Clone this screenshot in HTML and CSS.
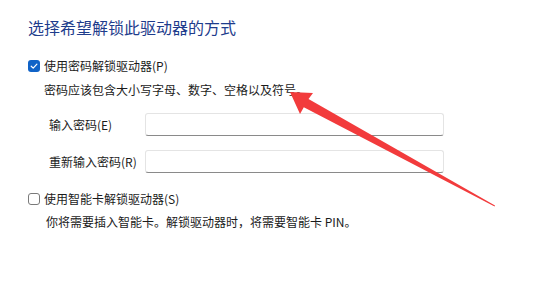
FILE: index.html
```html
<!DOCTYPE html>
<html lang="zh-CN">
<head>
<meta charset="utf-8">
<link rel="stylesheet" href="styles.css">
</head>
<body>
<div class="page">
  <h1 class="title">选择希望解锁此驱动器的方式</h1>
  <div class="option">
    <span class="check checked"><svg viewBox="0 0 12 12" width="12" height="12"><path d="M3.2 6.2 L5.2 8.1 L8.9 4.2" fill="none" stroke="#fff" stroke-width="1.2" stroke-linecap="round" stroke-linejoin="round"/></svg></span>
    <span class="label">使用密码解锁驱动器(P)</span>
  </div>
  <p class="desc">密码应该包含大小写字母、数字、空格以及符号。</p>
  <div class="fields">
    <div class="field"><span class="flabel">输入密码(E)</span><span class="input"></span></div>
    <div class="field"><span class="flabel">重新输入密码(R)</span><span class="input"></span></div>
  </div>
  <div class="option second">
    <span class="check"></span>
    <span class="label">使用智能卡解锁驱动器(S)</span>
  </div>
  <p class="desc desc2">你将需要插入智能卡。解锁驱动器时，将需要智能卡 PIN。</p>
</div>
<svg class="arrow" width="549" height="282" viewBox="0 0 549 282">
  <polygon points="290,92 313,93 308.5,99 495,205.4 494.6,206.6 303.8,107.2 300,114" fill="#f23b3c"/>
</svg>
</body>
</html>
```

FILE: styles.css
```css
html, body {
  margin: 0;
  padding: 0;
  background: #ffffff;
}
body {
  width: 549px;
  height: 282px;
  overflow: hidden;
  position: relative;
  font-family: "Noto Sans CJK SC", "Noto Sans", sans-serif;
  color: #1b1b1b;
  font-size: 12px;
}
.page {
  display: flex;
  flex-direction: column;
  padding: 16px 0 0 28px;
}
.title {
  margin: 0;
  font-size: 16px;
  font-weight: normal;
  line-height: 22px;
  color: #1e3c8c;
}
.option {
  display: flex;
  align-items: center;
  gap: 4px;
  height: 18px;
  margin-top: 19px;
  line-height: 18px;
}
.option.second {
  margin-top: 17px;
}
.check {
  width: 12px;
  height: 12px;
  box-sizing: border-box;
  border: 1px solid #7a7a7a;
  border-radius: 3px;
  background: #fff;
  display: flex;
}
.check.checked {
  border: none;
  background: #1063c7;
}
.check svg {
  display: block;
}
.desc {
  margin: 6px 0 0 16px;
  line-height: 18px;
}
.desc2 {
  margin-top: 5px;
  margin-left: 18px;
}
.fields {
  display: flex;
  flex-direction: column;
  gap: 14px;
  margin-top: 14px;
  padding-left: 21px;
}
.field {
  display: flex;
  align-items: center;
  height: 23px;
}
.flabel {
  width: 96px;
  line-height: 18px;
}
.input {
  width: 299px;
  height: 23px;
  box-sizing: border-box;
  border: 1px solid #e4e4e4;
  border-bottom: 1px solid #8a8a8a;
  border-radius: 3px;
  background: #fff;
}
.arrow {
  position: absolute;
  left: 0;
  top: 0;
  pointer-events: none;
}
```
